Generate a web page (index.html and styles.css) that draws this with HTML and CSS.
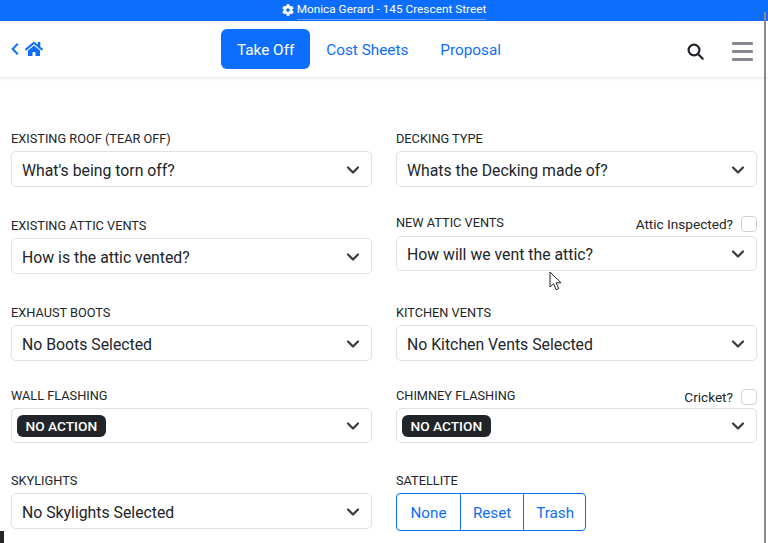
FILE: index.html
```html
<!DOCTYPE html>
<html lang="en">
<head>
    <meta charset="UTF-8">
    <title>Take Off</title>
    <link rel="stylesheet" href="styles.css">
</head>
<body>
    <div class="topbar">
        <a class="job-link" href="#">
            <svg class="gear" viewBox="0 0 512 512"><path d="M487.4 315.7l-42.6-24.6c4.3-23.2 4.3-47 0-70.2l42.6-24.6c4.9-2.8 7.1-8.6 5.5-14-11.1-35.6-30-67.8-54.7-94.6-3.8-4.1-10-5.1-14.8-2.3L380.8 110c-17.9-15.4-38.5-27.3-60.8-35.1V25.8c0-5.6-3.9-10.5-9.4-11.7-36.7-8.2-74.3-7.8-109.2 0-5.5 1.2-9.4 6.1-9.4 11.7V75c-22.2 7.9-42.8 19.8-60.8 35.1L88.7 85.5c-4.9-2.8-11-1.9-14.8 2.3-24.7 26.7-43.6 58.9-54.7 94.6-1.7 5.4.6 11.2 5.5 14L67.3 221c-4.3 23.2-4.3 47 0 70.2l-42.6 24.6c-4.9 2.8-7.1 8.6-5.5 14 11.1 35.6 30 67.8 54.7 94.6 3.8 4.1 10 5.1 14.8 2.3l42.6-24.6c17.9 15.4 38.5 27.3 60.8 35.1v49.2c0 5.6 3.9 10.5 9.4 11.7 36.7 8.2 74.3 7.8 109.2 0 5.5-1.2 9.4-6.1 9.4-11.7v-49.2c22.2-7.9 42.8-19.8 60.8-35.1l42.6 24.6c4.9 2.8 11 1.9 14.8-2.3 24.7-26.7 43.6-58.9 54.7-94.6 1.5-5.5-.7-11.3-5.6-14.1zM256 336c-44.1 0-80-35.9-80-80s35.9-80 80-80 80 35.9 80 80-35.9 80-80 80z"/></svg>
            <span class="job-text">Monica Gerard - 145 Crescent Street</span>
        </a>
    </div>

    <nav class="navbar">
        <a class="nav-back" href="#">
            <svg class="chevron-left" viewBox="0 0 10 16"><path d="M8.5 1.5 2 8l6.5 6.5"/></svg>
            <svg class="home" viewBox="0 0 576 512"><path d="M280.37 148.26L96 300.11V464a16 16 0 0 0 16 16l112.06-.29a16 16 0 0 0 15.92-16V368a16 16 0 0 1 16-16h64a16 16 0 0 1 16 16v95.64a16 16 0 0 0 16 16.05L464 480a16 16 0 0 0 16-16V300L295.67 148.26a12.19 12.19 0 0 0-15.3 0zM571.6 251.47L488 182.56V44.05a12 12 0 0 0-12-12h-56a12 12 0 0 0-12 12v72.61L318.47 43a48 48 0 0 0-61 0L4.34 251.47a12 12 0 0 0-1.6 16.9l25.5 31A12 12 0 0 0 45.15 301l235.22-193.74a12.19 12.19 0 0 1 15.3 0L530.9 301a12 12 0 0 0 16.9-1.6l25.5-31a12 12 0 0 0-1.7-16.93z"/></svg>
        </a>
        <div class="tabs">
            <a class="tab active" href="#">Take Off</a>
            <a class="tab" href="#">Cost Sheets</a>
            <a class="tab" href="#">Proposal</a>
        </div>
        <div class="nav-tools">
            <svg class="search" viewBox="0 0 17 17"><circle cx="7" cy="7" r="5.4"/><path d="m11 11 4.7 4.7"/></svg>
            <div class="burger"><span></span><span></span><span></span></div>
        </div>
    </nav>

    <main class="form-grid">
        <div class="field">
            <div class="field-label">Existing Roof (Tear Off)</div>
            <div class="picker"><span>What's being torn off?</span><svg class="caret" viewBox="0 0 16 16"><path d="m3 5.5 5 5 5-5"/></svg></div>
        </div>
        <div class="field">
            <div class="field-label">Decking Type</div>
            <div class="picker"><span>Whats the Decking made of?</span><svg class="caret" viewBox="0 0 16 16"><path d="m3 5.5 5 5 5-5"/></svg></div>
        </div>

        <div class="field">
            <div class="field-label">Existing Attic Vents</div>
            <div class="picker"><span>How is the attic vented?</span><svg class="caret" viewBox="0 0 16 16"><path d="m3 5.5 5 5 5-5"/></svg></div>
        </div>
        <div class="field">
            <div class="field-head head-vents">
                <div class="field-label">New Attic Vents</div>
                <label class="check">Attic Inspected?<span class="check-box"></span></label>
            </div>
            <div class="picker picker-short"><span>How will we vent the attic?</span><svg class="caret" viewBox="0 0 16 16"><path d="m3 5.5 5 5 5-5"/></svg></div>
        </div>

        <div class="field">
            <div class="field-label">Exhaust Boots</div>
            <div class="picker"><span>No Boots Selected</span><svg class="caret" viewBox="0 0 16 16"><path d="m3 5.5 5 5 5-5"/></svg></div>
        </div>
        <div class="field">
            <div class="field-label">Kitchen Vents</div>
            <div class="picker"><span>No Kitchen Vents Selected</span><svg class="caret" viewBox="0 0 16 16"><path d="m3 5.5 5 5 5-5"/></svg></div>
        </div>

        <div class="field">
            <div class="field-label">Wall Flashing</div>
            <div class="picker picker-pill"><span class="pill">NO ACTION</span><svg class="caret" viewBox="0 0 16 16"><path d="m3 5.5 5 5 5-5"/></svg></div>
        </div>
        <div class="field">
            <div class="field-head">
                <div class="field-label">Chimney Flashing</div>
                <label class="check">Cricket?<span class="check-box"></span></label>
            </div>
            <div class="picker picker-pill"><span class="pill">NO ACTION</span><svg class="caret" viewBox="0 0 16 16"><path d="m3 5.5 5 5 5-5"/></svg></div>
        </div>

        <div class="field">
            <div class="field-label">Skylights</div>
            <div class="picker"><span>No Skylights Selected</span><svg class="caret" viewBox="0 0 16 16"><path d="m3 5.5 5 5 5-5"/></svg></div>
        </div>
        <div class="field">
            <div class="field-label">Satellite</div>
            <div class="btn-group">
                <a class="btn-outline" href="#">None</a>
                <a class="btn-outline" href="#">Reset</a>
                <a class="btn-outline" href="#">Trash</a>
            </div>
        </div>
    </main>

    <!-- things lying on top of the page -->
    <div class="scroll-thumb"></div>
    <div class="corner-mark"></div>
    <svg class="pointer" viewBox="0 0 13 20"><path d="M1 1v15l3.6-3.3 2.5 6 2.6-1.1-2.6-5.8H12z"/></svg>
</body>
</html>
```

FILE: styles.css
```css
body {
    margin: 0;
    height: 543px;
    overflow: hidden;
    background-color: #fff;
    color: #212529;
    font-family: Roboto, "Liberation Sans", sans-serif;
    font-size: 15.8px;
}

a {
    text-decoration: none;
}

/* top strip */
.topbar {
    height: 21px;
    background-color: #0d6efd;
    display: flex;
    justify-content: center;
}
.job-link {
    display: flex;
    align-items: center;
    gap: 3px;
    color: #fff;
    font-size: 11.8px;
    height: 20px;
}
.gear {
    width: 12px;
    height: 12px;
    fill: #fff;
}
.job-text {
    border-bottom: 1px solid #6ea8fe;
    line-height: 19px;
}

/* nav */
.navbar {
    height: 56px;
    display: flex;
    align-items: center;
    padding: 0 15px 0 11px;
    box-shadow: 0 1px 4px rgba(0, 0, 0, 0.12);
    position: relative;
}
.nav-back {
    display: flex;
    align-items: center;
    gap: 6px;
    width: 210px;
}
.chevron-left {
    width: 8px;
    height: 14px;
    fill: none;
    stroke: #0d6efd;
    stroke-width: 2.4;
}
.home {
    width: 18px;
    height: 16px;
    fill: #0d6efd;
}
.tabs {
    display: flex;
}
.tab {
    color: #0d6efd;
    font-size: 15.3px;
    padding: 2px 16px 0;
    line-height: 38px;
    border-radius: 6px;
}
.tab.active {
    background-color: #0d6efd;
    color: #fff;
}
.nav-tools {
    display: flex;
    align-items: center;
    gap: 28px;
    margin-left: auto;
    margin-top: 5px;
}
.search {
    width: 17px;
    height: 17px;
    fill: none;
    stroke: #212529;
    stroke-width: 2.2;
    stroke-linecap: round;
}
.burger {
    width: 21px;
    display: flex;
    flex-direction: column;
    gap: 5px;
}
.burger span {
    height: 3px;
    background-color: #868a8e;
    border-radius: 1px;
}

/* form */
.form-grid {
    display: grid;
    grid-template-columns: 361px 361px;
    column-gap: 24px;
    grid-template-rows: 87px 87px 83px 85px auto;
    padding: 54px 0 0 11px;
}
.field-label {
    font-size: 12.75px;
    text-transform: uppercase;
    line-height: 16px;
    margin-bottom: 4px;
}
.field-head {
    display: flex;
    justify-content: space-between;
    height: 20px;
}
.head-vents {
    height: 23px;
    margin-top: -5px;
}
.head-vents .field-label {
    line-height: 20px;
}
.check {
    display: flex;
    align-items: center;
    font-size: 13.6px;
    gap: 8px;
    height: 18px;
}
.head-vents .check {
    height: 22px;
}
.check-box {
    box-sizing: border-box;
    width: 16px;
    height: 16px;
    border: 1px solid #ced4da;
    border-radius: 4px;
}
.picker {
    height: 32px;
    border: 1px solid #dee2e6;
    border-radius: 5px;
    display: flex;
    align-items: center;
    justify-content: space-between;
    padding: 2px 10px 0 10px;
    background-color: #fff;
}
.picker-short {
    height: 32px;
    padding-top: 1px;
}
.picker-pill {
    height: 32px;
    padding-top: 1px;
    padding-left: 5px;
}
.caret {
    width: 16px;
    height: 16px;
    fill: none;
    stroke: #343a40;
    stroke-width: 2.2;
    stroke-linecap: round;
    stroke-linejoin: round;
}
.pill {
    background-color: #212529;
    color: #fff;
    font-size: 13.7px;
    font-weight: 500;
    line-height: 22px;
    padding: 0 8.5px;
    border-radius: 6px;
}
.btn-group {
    display: inline-flex;
    border: 1px solid #0d6efd;
    border-radius: 4px;
    height: 36px;
}
.btn-outline {
    color: #0d6efd;
    font-size: 15.2px;
    line-height: 38px;
    padding: 0 12px;
    border-left: 1px solid #0d6efd;
}
.btn-outline:first-child {
    border-left: 0;
    padding: 0 13.5px;
}
.btn-outline:last-child {
    padding: 0 11px 0 12px;
}

/* overlays */
.scroll-thumb {
    position: absolute;
    left: 764px;
    top: 12px;
    bottom: 0;
    width: 2px;
    background-color: #8a8a8a;
}
.corner-mark {
    position: absolute;
    left: 0;
    top: 531px;
    width: 4px;
    height: 12px;
    background-color: #212529;
}
.pointer {
    position: absolute;
    left: 549px;
    top: 271px;
    width: 13px;
    height: 20px;
    fill: #fff;
    stroke: #222;
    stroke-width: 1;
}
```
